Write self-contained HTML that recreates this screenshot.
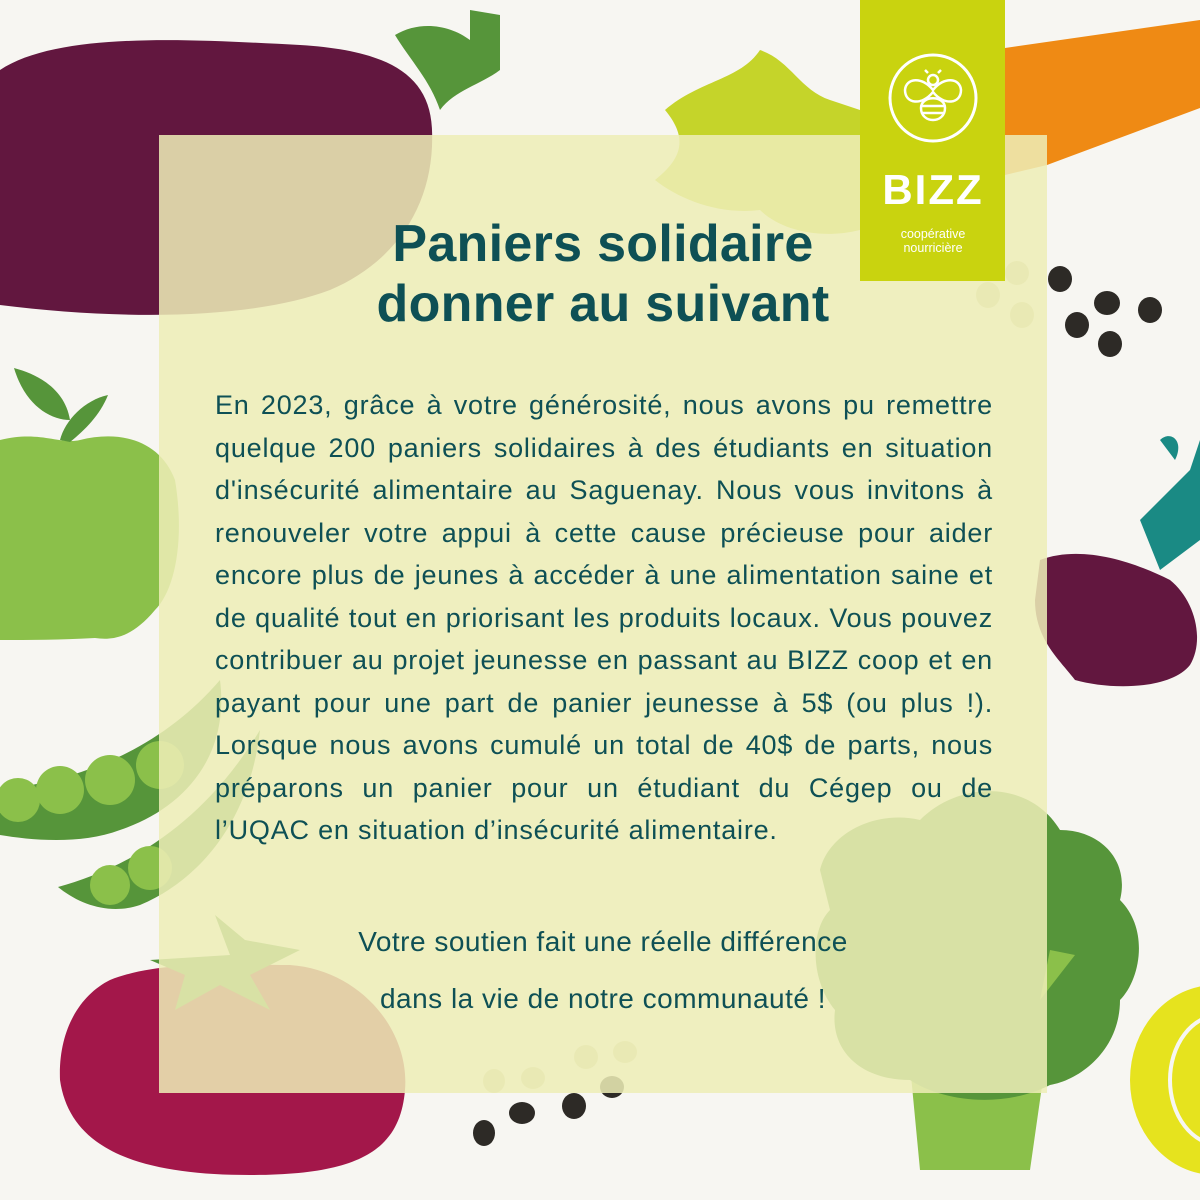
<!DOCTYPE html>
<html><head><meta charset="utf-8"><style>
html,body{margin:0;padding:0}
body{width:1200px;height:1200px;position:relative;overflow:hidden;background:#f7f6f2;font-family:"Liberation Sans",sans-serif}
svg.bg{position:absolute;left:0;top:0}
.panel{position:absolute;left:159px;top:135px;width:888px;height:958px;background:rgba(238,237,183,0.86)}
.logo{position:absolute;left:860px;top:0;width:145px;height:281px;background:#c9d30f;color:#fff;text-align:center}
h1{position:absolute;left:159px;width:888px;top:214px;margin:0;text-align:center;color:#0e5055;font-size:52px;line-height:60px;font-weight:bold;letter-spacing:0.3px}
.body{position:absolute;left:215px;top:384px;width:778px;color:#0e5055;font-size:27px;line-height:42.5px;letter-spacing:0.8px}
.body div{text-align:justify;text-align-last:justify;white-space:nowrap;overflow:visible}
.body div.l{text-align-last:left}
.close{position:absolute;left:159px;width:888px;text-align:center;color:#0e5055;font-size:28px;letter-spacing:0.5px}
</style></head><body>
<svg class="bg" width="1200" height="1200" viewBox="0 0 1200 1200">
 <path d="M0 70 C60 30 200 40 300 45 C380 50 430 70 432 130 C435 200 400 260 330 290 C250 320 120 320 0 305 Z" fill="#62173f"/>
 <path d="M395 35 C420 20 450 25 470 40 L470 10 L500 15 L500 70 C480 85 455 90 440 110 C430 80 410 60 395 35Z" fill="#56953a"/>
 <path d="M665 110 C700 80 740 80 760 50 C790 60 800 90 830 100 L860 110 L860 230 C820 240 780 230 760 210 C720 215 680 200 655 180 C680 160 690 140 665 110Z" fill="#c5d42a"/>
 <path d="M1005 48 L1200 20 L1200 108 L1047 165 L1005 175 Z" fill="#ef8a14"/>
 <g fill="#2d2a26">
  <ellipse cx="1060" cy="279" rx="12" ry="13"/><ellipse cx="1107" cy="303" rx="13" ry="12"/><ellipse cx="1150" cy="310" rx="12" ry="13"/>
  <ellipse cx="1077" cy="325" rx="12" ry="13"/><ellipse cx="1110" cy="344" rx="12" ry="13"/>
  <ellipse cx="484" cy="1133" rx="11" ry="13"/><ellipse cx="522" cy="1113" rx="13" ry="11"/><ellipse cx="574" cy="1106" rx="12" ry="13"/><ellipse cx="612" cy="1087" rx="12" ry="11"/>
 </g>
 <g fill="#cfcfa0">
  <ellipse cx="1017" cy="273" rx="12" ry="12"/><ellipse cx="988" cy="295" rx="12" ry="13"/><ellipse cx="1022" cy="315" rx="12" ry="13"/>
  <ellipse cx="494" cy="1081" rx="11" ry="12"/><ellipse cx="533" cy="1078" rx="12" ry="11"/><ellipse cx="586" cy="1057" rx="12" ry="12"/><ellipse cx="625" cy="1052" rx="12" ry="11"/>
 </g>
 <path d="M0 440 C40 430 60 445 80 440 C120 430 160 440 175 480 C185 540 175 590 155 610 C130 640 110 640 95 638 C60 640 30 640 0 640 Z" fill="#8bc04a"/>
 <path d="M14 368 C40 375 65 390 70 420 C50 420 25 405 14 368Z" fill="#56953a"/>
 <path d="M60 440 C65 420 85 400 108 395 C100 415 85 430 70 442Z" fill="#56953a"/>
 <path d="M0 790 C80 780 160 750 220 680 C230 760 180 810 120 830 C80 845 30 840 0 835Z" fill="#56953a"/>
 <g fill="#8bc04a"><circle cx="18" cy="800" r="22"/><circle cx="60" cy="790" r="24"/><circle cx="110" cy="780" r="25"/><circle cx="160" cy="765" r="24"/></g>
 <path d="M58 887 C120 870 200 830 260 730 C250 820 200 880 140 905 C110 915 80 905 58 887Z" fill="#56953a"/>
 <g fill="#8bc04a"><circle cx="110" cy="885" r="20"/><circle cx="150" cy="868" r="22"/></g>
 <path d="M1140 520 L1190 470 L1200 440 L1200 540 L1160 570Z" fill="#1a8a84"/>
 <path d="M1160 440 C1170 430 1185 440 1175 460Z" fill="#1a8a84"/>
 <path d="M1040 560 C1080 545 1130 560 1170 580 C1195 600 1205 640 1190 665 C1170 690 1110 690 1075 680 C1060 660 1035 640 1035 600 Z" fill="#62173f"/>
 <ellipse cx="1215" cy="1080" rx="85" ry="95" fill="#e6e31e"/>
 <ellipse cx="1220" cy="1080" rx="50" ry="65" fill="none" stroke="#f7f6f2" stroke-width="4"/>
 <path d="M900 960 L1060 960 L1030 1170 L920 1170Z" fill="#8bc04a"/>
 <path d="M820 870 C830 830 880 810 920 820 C960 780 1030 780 1060 830 C1100 830 1130 860 1120 900 C1150 930 1140 980 1120 1000 C1120 1050 1080 1080 1050 1085 C1000 1110 940 1100 910 1080 C860 1080 830 1050 835 1010 C810 980 810 930 830 910Z" fill="#56953a"/>
 <path d="M1050 950 L1075 955 L1040 1000Z" fill="#8bc04a"/>
 <path d="M110 980 C160 960 230 965 290 965 C360 970 410 1030 405 1090 C400 1150 360 1175 250 1175 C140 1175 70 1150 60 1080 C58 1030 80 995 110 980Z" fill="#a3174a"/>
 <path d="M150 960 L230 955 L215 915 L245 940 L300 950 L250 975 L270 1010 L220 985 L175 1010 L185 975Z" fill="#56953a"/>
</svg>
<div class="panel"></div>
<div class="logo">
 <svg width="145" height="281" viewBox="0 0 145 281">
  <circle cx="73" cy="98" r="43" fill="none" stroke="#fff" stroke-width="3"/>
  <g fill="none" stroke="#fff" stroke-width="2.5">
   <circle cx="73" cy="80" r="5"/>
   <path d="M68 73 L65 70 M78 73 L81 70"/>
   <path d="M73 90 C62 76 46 78 45 90 C45 104 62 106 73 92 C84 106 101 104 101 90 C100 78 84 76 73 90Z"/>
   <path d="M61 108 C61 95 85 95 85 108 C85 124 61 124 61 108Z"/>
   <path d="M62 106 L84 106 M63 113 L83 113"/>
  </g>
  <text x="73" y="204" text-anchor="middle" fill="#fff" font-family="Liberation Sans, sans-serif" font-size="42" font-weight="bold" letter-spacing="2">BIZZ</text>
  <text x="73" y="238" text-anchor="middle" fill="#fff" font-family="Liberation Sans, sans-serif" font-size="12.5">coopérative</text>
  <text x="73" y="252" text-anchor="middle" fill="#fff" font-family="Liberation Sans, sans-serif" font-size="12.5">nourricière</text>
 </svg>
</div>
<h1>Paniers solidaire<br>donner au suivant</h1>
<div class="body">
<div>En 2023, grâce à votre générosité, nous avons pu remettre</div>
<div>quelque 200 paniers solidaires à des étudiants en situation</div>
<div>d'insécurité alimentaire au Saguenay. Nous vous invitons à</div>
<div>renouveler votre appui à cette cause précieuse pour aider</div>
<div>encore plus de jeunes à accéder à une alimentation saine et</div>
<div>de qualité tout en priorisant les produits locaux. Vous pouvez</div>
<div>contribuer au projet jeunesse en passant au BIZZ coop et en</div>
<div>payant pour une part de panier jeunesse à 5$ (ou plus !).</div>
<div>Lorsque nous avons cumulé un total de 40$ de parts, nous</div>
<div>préparons un panier pour un étudiant du Cégep ou de</div>
<div class="l">l’UQAC en situation d’insécurité alimentaire.</div>
</div>
<div class="close" style="top:926px">Votre soutien fait une réelle différence</div>
<div class="close" style="top:983px">dans la vie de notre communauté !</div>
</body></html>
